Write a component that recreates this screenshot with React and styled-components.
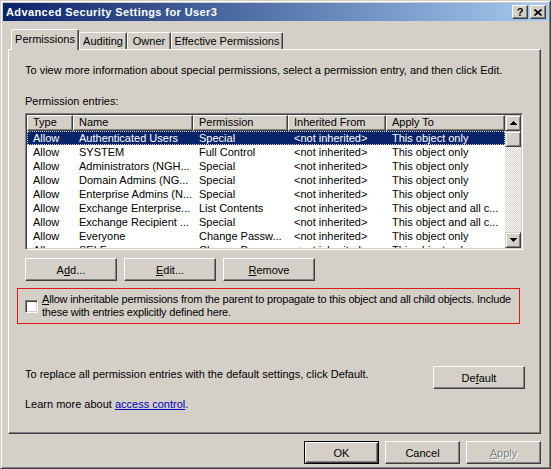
import styled, { createGlobalStyle } from "styled-components";

const FACE = "#d4d0c8";

const COLUMNS = [
  { key: "type", label: "Type", w: 46 },
  { key: "name", label: "Name", w: 120 },
  { key: "perm", label: "Permission", w: 95 },
  { key: "inh", label: "Inherited From", w: 98 },
  { key: "apply", label: "Apply To", w: 119 },
];

const NI = "<not inherited>";
const ONLY = "This object only";
const ALL = "This object and all c...";

const ENTRIES = [
  { type: "Allow", name: "Authenticated Users", perm: "Special", inh: NI, apply: ONLY },
  { type: "Allow", name: "SYSTEM", perm: "Full Control", inh: NI, apply: ONLY },
  { type: "Allow", name: "Administrators (NGH...", perm: "Special", inh: NI, apply: ONLY },
  { type: "Allow", name: "Domain Admins (NG...", perm: "Special", inh: NI, apply: ONLY },
  { type: "Allow", name: "Enterprise Admins (N...", perm: "Special", inh: NI, apply: ONLY },
  { type: "Allow", name: "Exchange Enterprise...", perm: "List Contents", inh: NI, apply: ALL },
  { type: "Allow", name: "Exchange Recipient ...", perm: "Special", inh: NI, apply: ALL },
  { type: "Allow", name: "Everyone", perm: "Change Passw...", inh: NI, apply: ONLY },
  { type: "Allow", name: "SELF", perm: "Change Passw...", inh: NI, apply: ONLY },
];

const TABS = [
  { label: "Permissions", w: 68, active: true },
  { label: "Auditing", w: 48 },
  { label: "Owner", w: 44 },
  { label: "Effective Permissions", w: 112 },
];

const GlobalStyle = createGlobalStyle`
  html, body {
    margin: 0;
    padding: 0;
    background: ${FACE};
  }
  body {
    font-family: "Liberation Sans", Arial, sans-serif;
    font-size: 11px;
    color: #000;
  }
`;

const raised = `
  border: 1px solid;
  border-color: #fff #404040 #404040 #fff;
  box-shadow: inset -1px -1px #808080;
`;

const Window = styled.div`
  width: 551px;
  height: 469px;
  box-sizing: border-box;
  background: ${FACE};
  border: 1px solid;
  border-color: ${FACE} #404040 #404040 ${FACE};
  box-shadow: inset 1px 1px #fff, inset -1px -1px #808080;
  padding: 2px;
  display: flex;
  flex-direction: column;
`;

const TitleBar = styled.div`
  height: 18px;
  flex: none;
  display: flex;
  align-items: center;
  justify-content: space-between;
  padding: 0 2px 0 3px;
  background: linear-gradient(to right, #0a246a, #a6caf0);
`;

const TitleText = styled.div`
  color: #fff;
  font-weight: bold;
  font-size: 11px;
  letter-spacing: 0.4px;
  white-space: nowrap;
`;

const CaptionButtons = styled.div`
  display: flex;
  gap: 2px;
`;

const CaptionButton = styled.div`
  width: 16px;
  height: 14px;
  box-sizing: border-box;
  background: ${FACE};
  ${raised}
  display: flex;
  align-items: center;
  justify-content: center;
  font-weight: bold;
  font-size: 11px;
  line-height: 12px;
`;

const Body = styled.div`
  flex: 1;
  display: flex;
  flex-direction: column;
  padding: 8px 7px 0 5px;
`;

const TabRow = styled.div`
  display: flex;
  align-items: flex-end;
  height: 20px;
  padding-left: 3px;
`;

const Tab = styled.div`
  position: relative;
  z-index: 1;
  width: ${(p) => p.$w}px;
  height: ${(p) => (p.$active ? 21 : 17)}px;
  margin-bottom: ${(p) => (p.$active ? -1 : 0)}px;
  box-sizing: border-box;
  background: ${FACE};
  border: 1px solid;
  border-bottom: none;
  border-color: #fff #404040 transparent #fff;
  box-shadow: inset -1px 0 #808080;
  border-radius: 2px 2px 0 0;
  padding-top: ${(p) => (p.$active ? 3 : 2)}px;
  line-height: 13px;
  text-align: center;
  white-space: nowrap;
`;

const Panel = styled.div`
  flex: none;
  width: 533px;
  height: 385px;
  box-sizing: border-box;
  ${raised}
  padding: 14px 15px 0 16px;
  display: flex;
  flex-direction: column;
`;

const Line = styled.div`
  line-height: 13px;
  white-space: nowrap;
  margin-top: ${(p) => p.$mt || 0}px;
`;

const ListBox = styled.div`
  margin-top: 5px;
  width: 498px;
  height: 137px;
  box-sizing: border-box;
  border: 1px solid;
  border-color: #808080 #fff #fff #808080;
  box-shadow: inset 1px 1px #404040, inset -1px -1px ${FACE};
  padding: 1px;
  background: #fff;
  display: flex;
`;

const ListMain = styled.div`
  width: 478px;
  display: flex;
  flex-direction: column;
  overflow: hidden;
`;

const HeaderRow = styled.div`
  display: flex;
  height: 16px;
  flex: none;
`;

const HeaderCell = styled.div`
  width: ${(p) => p.$w}px;
  box-sizing: border-box;
  background: ${FACE};
  ${raised}
  padding-left: 5px;
  line-height: 13px;
  white-space: nowrap;
  overflow: hidden;
`;

const Rows = styled.div`
  flex: 1;
  overflow: hidden;
`;

const Row = styled.div`
  display: flex;
  height: 14px;
  line-height: 14px;
  background: ${(p) => (p.$selected ? "#0a246a" : "transparent")};
  color: ${(p) => (p.$selected ? "#fff" : "#000")};
  outline: ${(p) => (p.$selected ? `1px dotted ${FACE}` : "none")};
  outline-offset: -1px;
`;

const Cell = styled.div`
  width: ${(p) => p.$w}px;
  flex: none;
  box-sizing: border-box;
  padding-left: 6px;
  white-space: nowrap;
  overflow: hidden;
`;

const ScrollBar = styled.div`
  width: 16px;
  flex: none;
  display: flex;
  flex-direction: column;
  background-color: #fff;
  background-image: repeating-conic-gradient(${FACE} 0 25%, #fff 0 50%);
  background-size: 2px 2px;
`;

const ScrollPart = styled.div`
  width: 16px;
  height: 16px;
  flex: none;
  box-sizing: border-box;
  background: ${FACE};
  border: 1px solid;
  border-color: ${FACE} #404040 #404040 ${FACE};
  box-shadow: inset 1px 1px #fff, inset -1px -1px #808080;
  display: flex;
  align-items: center;
  justify-content: center;
`;

const Track = styled.div`
  flex: 1;
`;

const ButtonRow = styled.div`
  display: flex;
  gap: ${(p) => p.$gap || 7}px;
  margin-top: ${(p) => p.$mt || 0}px;
  justify-content: ${(p) => p.$justify || "flex-start"};
`;

const Button = styled.button`
  width: ${(p) => p.$w || 92}px;
  height: 23px;
  box-sizing: border-box;
  padding: 0;
  margin: 0;
  background: ${FACE};
  font-family: inherit;
  font-size: 11px;
  color: ${(p) => (p.$disabled ? "#808080" : "#000")};
  text-shadow: ${(p) => (p.$disabled ? "1px 1px #fff" : "none")};
  border: 1px solid;
  border-color: ${(p) => (p.$default ? "#000" : "#fff #404040 #404040 #fff")};
  box-shadow: ${(p) =>
    p.$default
      ? "inset 1px 1px #fff, inset -1px -1px #404040, inset -2px -2px #808080"
      : "inset -1px -1px #808080"};
`;

const U = styled.span`
  text-decoration: underline;
`;

const InheritBox = styled.div`
  margin-top: 7px;
  margin-left: -8px;
  width: 503px;
  height: 36px;
  box-sizing: border-box;
  border: 1px solid #e01818;
  padding: 0 8px 0 7px;
  display: flex;
  align-items: center;
  gap: 4px;
`;

const Checkbox = styled.div`
  width: 13px;
  height: 13px;
  flex: none;
  box-sizing: border-box;
  background: #fff;
  border: 1px solid;
  border-color: #808080 #fff #fff #808080;
  box-shadow: inset 1px 1px #404040, inset -1px -1px ${FACE};
`;

const CheckText = styled.div`
  line-height: 13px;
  letter-spacing: -0.2px;
  white-space: nowrap;
`;

const DefaultRow = styled.div`
  margin-top: 42px;
  display: flex;
  justify-content: space-between;
  align-items: flex-start;
`;

const Link = styled.a`
  color: #0000c0;
  text-decoration: underline;
`;

const Arrow = ({ down }) => (
  <svg width="7" height="4" viewBox="0 0 7 4" shapeRendering="crispEdges"
    style={down ? { transform: "scaleY(-1)" } : undefined}>
    <path d="M3 0h1v1h1v1h1v1h1v1H0V3h1V2h1V1h1z" fill="#000" />
  </svg>
);

const CloseGlyph = () => (
  <svg width="8" height="7" viewBox="0 0 8 7">
    <path d="M0.5 0.5L7.5 6.5M7.5 0.5L0.5 6.5" stroke="#000" strokeWidth="1.6" />
  </svg>
);

export default function App() {
  return (
    <>
      <GlobalStyle />
      <Window>
        <TitleBar>
          <TitleText>Advanced Security Settings for User3</TitleText>
          <CaptionButtons>
            <CaptionButton>?</CaptionButton>
            <CaptionButton>
              <CloseGlyph />
            </CaptionButton>
          </CaptionButtons>
        </TitleBar>

        <Body>
          <TabRow>
            {TABS.map((t) => (
              <Tab key={t.label} $w={t.w} $active={t.active}>
                {t.label}
              </Tab>
            ))}
          </TabRow>

          <Panel>
            <Line>
              To view more information about special permissions, select a permission entry, and then click Edit.
            </Line>
            <Line $mt={18}>Permission entries:</Line>

            <ListBox>
              <ListMain>
                <HeaderRow>
                  {COLUMNS.map((c) => (
                    <HeaderCell key={c.key} $w={c.w}>
                      {c.label}
                    </HeaderCell>
                  ))}
                </HeaderRow>
                <Rows>
                  {ENTRIES.map((e, i) => (
                    <Row key={i} $selected={i === 0}>
                      {COLUMNS.map((c) => (
                        <Cell key={c.key} $w={c.w}>
                          {e[c.key]}
                        </Cell>
                      ))}
                    </Row>
                  ))}
                </Rows>
              </ListMain>
              <ScrollBar>
                <ScrollPart>
                  <Arrow />
                </ScrollPart>
                <ScrollPart />
                <Track />
                <ScrollPart>
                  <Arrow down />
                </ScrollPart>
              </ScrollBar>
            </ListBox>

            <ButtonRow $mt={8}>
              <Button>
                A<U>d</U>d...
              </Button>
              <Button>
                <U>E</U>dit...
              </Button>
              <Button>
                <U>R</U>emove
              </Button>
            </ButtonRow>

            <InheritBox>
              <Checkbox />
              <CheckText>
                <U>A</U>llow inheritable permissions from the parent to propagate to this object and all child objects. Include
                <br />
                these with entries explicitly defined here.
              </CheckText>
            </InheritBox>

            <DefaultRow>
              <Line $mt={2}>To replace all permission entries with the default settings, click Default.</Line>
              <Button>
                De<U>f</U>ault
              </Button>
            </DefaultRow>

            <Line $mt={9}>
              Learn more about <Link href="#">access control</Link>.
            </Line>
          </Panel>

          <ButtonRow $mt={7} $gap={6} $justify="flex-end">
            <Button $w={75} $default>
              OK
            </Button>
            <Button $w={75}>Cancel</Button>
            <Button $w={75} $disabled>
              <U>A</U>pply
            </Button>
          </ButtonRow>
        </Body>
      </Window>
    </>
  );
}
